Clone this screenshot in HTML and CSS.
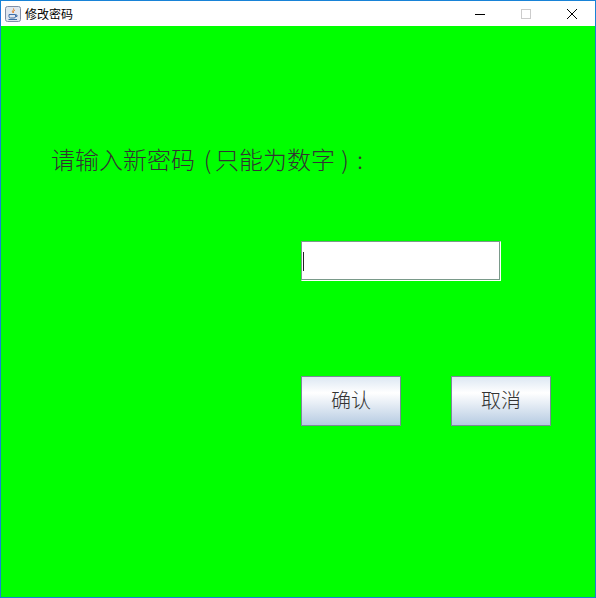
FILE: index.html
```html
<!DOCTYPE html>
<html lang="zh-CN">
<head>
    <meta charset="UTF-8">
    <title>修改密码</title>
    <link rel="stylesheet" href="styles.css">
</head>
<body>
    <div class="window">
        <div class="titlebar">
            <svg class="app-icon" width="16" height="16" viewBox="0 0 16 16">
                <rect x="0.5" y="0.5" width="15" height="15" rx="2" fill="#dfe6f0" stroke="#7f8fa8"/>
                <path d="M8.500 2.500c1 1.500-2 2.500-1 4M10 4c-1 1-2.500 1.500-1.500 3" fill="none" stroke="#e07b20"/>
                <path d="M4 8.500h6.500v2q0 1.500-1.500 1.500h-3.500q-1.500 0-1.500-1.500zM10.500 9h1.500v1.500h-1.500" fill="none" stroke="#3f6fa8"/>
                <path d="M3.500 13.500h8.500" stroke="#3f6fa8"/>
            </svg>
            <span class="title">修改密码</span>
            <div class="controls">
                <span class="control">
                    <svg width="12" height="12" viewBox="0 0 12 12"><path d="M1 6.500h10" stroke="#000"/></svg>
                </span>
                <span class="control">
                    <svg width="12" height="12" viewBox="0 0 12 12"><rect x="1.500" y="1.500" width="9" height="9" fill="none" stroke="#ccc"/></svg>
                </span>
                <span class="control">
                    <svg width="12" height="12" viewBox="0 0 12 12"><path d="M1 1l10 10M11 1l-10 10" stroke="#000" fill="none"/></svg>
                </span>
            </div>
        </div>
        <div class="content">
            <div class="prompt">请输入新密码<span class="paren paren-open">(</span>只能为数字<span class="paren">)</span><span class="colon">:</span></div>
            <div class="field-row">
                <div class="field"><span class="caret"></span></div>
            </div>
            <div class="button-row">
                <button class="btn">确认</button>
                <button class="btn">取消</button>
            </div>
        </div>
    </div>
</body>
</html>
```
FILE: styles.css
```css
html, body {
    margin: 0;
    padding: 0;
}

body {
    width: 596px;
    height: 598px;
    overflow: hidden;
    font-family: "Noto Sans CJK SC", sans-serif;
}

.window {
    box-sizing: border-box;
    width: 596px;
    height: 598px;
    display: flex;
    flex-direction: column;
    border: 1px solid #1883d7;
    background: #00ff00;
}

.titlebar {
    height: 25px;
    display: flex;
    align-items: center;
    background: #fff;
    padding-left: 4px;
}

.app-icon {
    flex: none;
}

.title {
    margin-left: 4px;
    font-size: 12px;
    color: #000;
}

.controls {
    margin-left: auto;
    display: flex;
}

.control {
    width: 46px;
    height: 25px;
    display: flex;
    align-items: center;
    justify-content: center;
}

.content {
    flex: 1;
    display: flex;
    flex-direction: column;
    padding: 114px 44px 0 50px;
}

.prompt {
    height: 38px;
    line-height: 38px;
    font-size: 24px;
    font-weight: 300;
    color: #333;
    white-space: nowrap;
}

.paren {
    box-sizing: border-box;
    display: inline-block;
    width: 20px;
    text-align: center;
}

.paren-open {
    padding-left: 5px;
}

.colon {
    display: inline-block;
    margin-left: 2px;
}

.field-row {
    display: flex;
    justify-content: flex-end;
    margin-top: 63px;
    padding-right: 50px;
}

.field {
    box-sizing: border-box;
    width: 200px;
    height: 40px;
    display: flex;
    align-items: center;
    padding-left: 1px;
    background: #fff;
    border: 1px solid;
    border-color: #7a9a8a #fff #fff #7a9a8a;
    box-shadow: inset -1px -1px 0 #7a9a8a;
}

.caret {
    width: 1px;
    height: 19px;
    background: #222;
}

.button-row {
    display: flex;
    justify-content: flex-end;
    gap: 50px;
    margin-top: 95px;
}

.btn {
    box-sizing: border-box;
    width: 100px;
    height: 50px;
    padding: 0 0 3px;
    border: 1px solid #7a8a99;
    background: linear-gradient(to bottom, #dde8f3 0%, #ffffff 33%, #b6cbe2 100%);
    font-family: inherit;
    font-size: 20px;
    font-weight: 300;
    color: #333;
}
```
